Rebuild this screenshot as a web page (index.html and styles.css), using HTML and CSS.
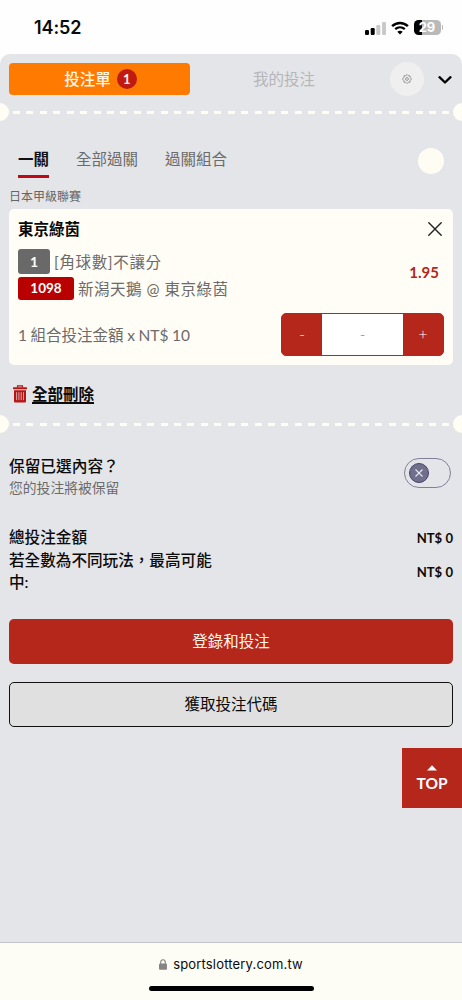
FILE: index.html
```html
<!DOCTYPE html>
<html lang="zh-Hant">
<head>
<meta charset="utf-8">
<meta name="viewport" content="width=device-width, initial-scale=1">
<title>投注單</title>
<link rel="stylesheet" href="styles.css">
</head>
<body>
<div class="screen">
  <header class="status">
    <span class="clock">14:52</span>
    <div class="indicators">
      <svg class="signal" width="21" height="13" viewBox="0 0 21 13"><rect x="0" y="8" width="4" height="5" rx="1.2" fill="#000"/><rect x="5.7" y="6" width="4" height="7" rx="1.2" fill="#000"/><rect x="11.3" y="3" width="4" height="10" rx="1.2" fill="#c9c9c9"/><rect x="17" y="0" width="4" height="13" rx="1.2" fill="#c9c9c9"/></svg>
      <svg class="wifi" width="18" height="14" viewBox="0 0 18 14" fill="none" stroke="#000"><path d="M1.1 5.1C5.7.8 12.3.8 16.9 5.1" stroke-width="2.5"/><path d="M4.2 8.2c2.8-2.5 6.8-2.5 9.6 0" stroke-width="2.4"/><path d="M9 13.4 6.3 10.8c1.5-1.3 3.9-1.3 5.4 0z" fill="#000" stroke="none"/></svg>
      <div class="battery"><span>29</span></div>
      <i class="battery-cap"></i>
    </div>
  </header>

  <main class="sheet">
    <div class="slip-head">
      <div class="slip-tab active"><span class="label">投注單</span><span class="count">1</span></div>
      <div class="slip-tab"><span class="label">我的投注</span></div>
      <div class="gear">
        <svg width="10" height="10" viewBox="0 0 10 10" fill="none" stroke="#8c8c8c" stroke-width=".9" stroke-linejoin="round"><path d="M5 .5 6.2 1.7 8 1.8 8.3 3.7 9.5 5 8.3 6.3 8 8.2 6.2 8.3 5 9.5 3.8 8.3 2 8.2 1.7 6.3.5 5 1.7 3.7 2 1.8 3.8 1.7z"/><circle cx="5" cy="5" r="1.4"/></svg>
      </div>
      <svg class="chevron" width="14" height="10" viewBox="0 0 14 10" fill="none" stroke="#000" stroke-width="2.3" stroke-linecap="round" stroke-linejoin="round"><path d="M1.5 2.2 7 7.5l5.5-5.3"/></svg>
    </div>
    <div class="perforation"><i></i></div>

    <nav class="modes">
      <span class="mode selected">一關</span>
      <span class="mode">全部過關</span>
      <span class="mode">過關組合</span>
      <i class="dot"></i>
    </nav>
    <div class="league">日本甲級聯賽</div>

    <section class="card">
      <div class="card-title"><b>東京綠茵</b>
        <svg width="14" height="14" viewBox="0 0 14 14" stroke="#222" stroke-width="1.4" stroke-linecap="round"><path d="M.8.8l12.4 12.4M13.2.8.8 13.2"/></svg>
      </div>
      <div class="pick">
        <div class="pick-lines">
          <div class="pick-line"><span class="tag gray">1</span><span class="first-text">[角球數]不讓分</span></div>
          <div class="pick-line"><span class="tag red">1098</span><span>新潟天鵝 @ 東京綠茵</span></div>
        </div>
        <span class="odds">1.95</span>
      </div>
      <div class="stake">
        <span class="stake-text">1 組合投注金額 x NT$ 10</span>
        <div class="stepper"><span class="step">-</span><span class="amount">-</span><span class="step">+</span></div>
      </div>
    </section>

    <div class="clear">
      <svg width="14" height="18" viewBox="0 0 14 18"><path d="M4.6 2.5V.9h4.8v1.6" fill="none" stroke="#b81414" stroke-width="1.3"/><rect x="0" y="2.2" width="14" height="2" rx=".5" fill="#b81414"/><path d="M1 5.3h12v10.9c0 .8-.5 1.3-1.3 1.3H2.3c-.8 0-1.3-.5-1.3-1.3z" fill="#b81414"/><path d="M3.6 7.2v8M5.9 7.2v8M8.2 7.2v8M10.5 7.2v8" stroke="#e8cccd" stroke-width=".8"/></svg>
      <span>全部刪除</span>
    </div>
    <div class="perforation"><i></i></div>

    <div class="keep">
      <div><div class="keep-title">保留已選內容？</div><div class="keep-note">您的投注將被保留</div></div>
      <div class="toggle"><span class="knob"><svg width="8" height="8" viewBox="0 0 8 8" stroke="#e8e8ef" stroke-width="1.1"><path d="M.5.5l7 7M7.5.5l-7 7"/></svg></span></div>
    </div>

    <div class="totals">
      <div class="total"><span>總投注金額</span><b>NT$ 0</b></div>
      <div class="total"><span class="wrap">若全數為不同玩法，最高可能中:</span><b>NT$ 0</b></div>
    </div>

    <div class="actions">
      <div class="button primary">登錄和投注</div>
      <div class="button outline">獲取投注代碼</div>
    </div>
    <div class="top"><svg width="10" height="6" viewBox="0 0 10 6"><path d="M0 5.5 5 .3l5 5.2z" fill="#fff"/></svg><span>TOP</span></div>
  </main>

  <footer class="browser">
    <div class="address"><svg width="8" height="11" viewBox="0 0 8 11"><rect x="0" y="4.6" width="8" height="6.2" rx="1.1" fill="#858583"/><path d="M1.7 5V3.2a2.3 2.5 0 0 1 4.6 0V5" fill="none" stroke="#858583" stroke-width="1.1"/></svg><span>sportslottery.com.tw</span></div>
    <i class="home"></i>
  </footer>
</div>
</body>
</html>
```
FILE: styles.css
```css
* { box-sizing: border-box; }
body { margin: 0; background: #fefefe; font-family: Lato, "Noto Sans CJK TC", sans-serif; font-size: 15.5px; color: #0b0b0b; }
svg { display: block; flex: none; }
.screen { width: 462px; height: 1000px; display: flex; flex-direction: column; overflow: hidden; white-space: nowrap; }

.status { height: 54px; flex: none; display: flex; justify-content: space-between; padding: 17px 19px 0 34px; font-family: Inter, sans-serif; }
.clock { font-size: 18px; line-height: 22px; font-weight: 600; letter-spacing: -.1px; }
.indicators { display: flex; height: 21px; align-items: center; }
.signal { margin-top: 1px; }
.wifi { margin-left: 5px; }
.battery { width: 27px; height: 15px; margin-left: 5px; border-radius: 4.5px; background: linear-gradient(90deg, #000 8px, #b9b9b9 8px); color: #fff; font-weight: 700; font-size: 13px; line-height: 15px; text-align: center; }
.battery-cap { width: 1.5px; height: 5px; margin-left: 1px; border-radius: 0 2px 2px 0; background: #b9b9b9; }

.sheet { position: relative; height: 888px; flex: none; background: #e4e5e8; border-radius: 10px 10px 0 0; }
.slip-head { height: 49px; padding-left: 9px; display: flex; align-items: center; }
.slip-tab { width: 188px; color: #b5b6b8; text-align: center; }
.label { display: block; padding-bottom: 2px; }
.slip-tab.active { width: 181px; height: 32px; display: flex; align-items: center; justify-content: center; gap: 6px; padding-left: 2px; border-radius: 4px; background: #ff7a00; color: #fff6e8; font-weight: 500; }
.count { width: 20px; height: 20px; border-radius: 50%; background: #c11a12; line-height: 20px; font-size: 13px; font-weight: 700; }
.gear { width: 34px; height: 34px; margin-left: 12px; border-radius: 50%; background: #efefef; display: flex; align-items: center; justify-content: center; }
.chevron { margin-left: 14px; margin-top: 2px; }

.perforation { height: 18px; display: flex; align-items: center; justify-content: space-between; overflow: hidden; }
.perforation::before, .perforation::after { content: ""; width: 18px; height: 18px; flex: none; border-radius: 50%; background: #fffdf4; margin-left: -9px; }
.perforation::after { margin: 0 -9px 0 0; }
.perforation i { width: 436px; height: 3px; margin-top: 1px; background: repeating-linear-gradient(90deg, #fffdf2 0 7px, transparent 7px 13.42px); }

.modes { height: 58px; padding: 23px 18px 0; display: flex; gap: 27px; color: #6b6b6b; }
.mode { height: 34px; line-height: 30px; }
.mode.selected { border-bottom: 3px solid #bf0a14; color: #111; font-weight: 700; }
.dot { width: 26px; height: 26px; margin: 4px 0 0 auto; border-radius: 50%; background: #fffdf3; }
.league { height: 30px; padding: 9px 9px 0; line-height: 18px; font-size: 12px; color: #666; }

.card { height: 156px; margin: 0 9px; padding: 9px; border-radius: 5px; background: #fffdf5; color: #6b6b6b; }
.card-title { height: 22px; display: flex; align-items: center; justify-content: space-between; padding-right: 2px; color: #080808; }
.card-title b { padding-bottom: 2px; }
.pick { display: flex; justify-content: space-between; align-items: center; padding-right: 5px; height: 64px; }
.pick-lines { padding-top: 6px; letter-spacing: .5px; }
.pick-line { height: 27.5px; display: flex; align-items: center; gap: 4px; }
.pick-line span:last-child { padding-bottom: 1px; }
.pick-line .first-text { letter-spacing: .65px; }
.tag { height: 25px; line-height: 25px; border-radius: 3px; color: #fff; text-align: center; font-size: 14px; font-weight: 700; letter-spacing: 0; }
.gray { width: 32px; background: #696969; }
.red { width: 56px; height: 23px; line-height: 23px; background: #b90000; font-size: 13.5px; }
.odds { color: #b5261b; font-size: 15px; font-weight: 700; margin-top: -1px; }
.stake { display: flex; align-items: center; justify-content: space-between; margin-top: 9px; height: 43px; }
.stake-text { padding-bottom: 2px; word-spacing: -.4px; }
.stepper { width: 163px; height: 43px; border: 1px solid #b5261b; border-radius: 5px; overflow: hidden; display: grid; grid-template-columns: 40px 1fr 40px; background: #b5261b; text-align: center; line-height: 41px; font-weight: 300; }
.step { color: #fff; }
.amount { background: #fff; color: #777; }

.clear { height: 50px; padding: 8px 13px 0; display: flex; gap: 5px; font-weight: 700; line-height: 42px; }
.clear svg { margin-top: 12px; }
.clear span { text-decoration: underline; text-decoration-thickness: 1.5px; text-underline-offset: 2px; height: 42px; }

.keep { height: 92px; padding: 23px 11px 0 9px; display: flex; justify-content: space-between; align-items: flex-start; }
.keep-title { font-weight: 500; font-size: 15.7px; line-height: 21px; }
.keep-note { font-size: 13.8px; line-height: 21px; color: #6b6b6b; }
.toggle { width: 47px; height: 30px; margin-top: 2px; padding-left: 4px; border: 1px solid #827f9e; border-radius: 15px; display: flex; align-items: center; }
.knob { width: 20px; height: 20px; border: 1px solid #47446c; border-radius: 50%; background: #706f8c; display: flex; align-items: center; justify-content: center; }

.totals { height: 94px; padding: 0 9px; font-size: 15.6px; font-weight: 500; }
.total { display: flex; justify-content: space-between; align-items: center; line-height: 22px; }
.total b { font-size: 13.1px; padding-top: 2px; }
.wrap { width: 206px; white-space: normal; }
.actions { display: grid; gap: 18px; padding: 0 9px; }
.button { height: 45px; border-radius: 5px; line-height: 45px; text-align: center; }
.primary { background: #b5261b; color: #fff3ec; }
.outline { border: 1px solid #111; background: #e0e0e0; line-height: 42px; }
.top { position: absolute; right: 0; top: 694px; width: 60px; height: 60px; padding-top: 17px; background: #b5261b; color: #fff; display: flex; flex-direction: column; align-items: center; font-size: 15.5px; font-weight: 700; line-height: 24px; }

.browser { height: 58px; border-top: 1px solid #c4c5c6; background: #fdfcf5; padding-top: 11px; }
.address { height: 20px; display: flex; gap: 6px; align-items: center; justify-content: center; font: 13px/20px Inter, sans-serif; letter-spacing: .17px; }
.home { display: block; width: 165px; height: 5px; margin: 12px auto 0; border-radius: 3px; background: #000; }
```
